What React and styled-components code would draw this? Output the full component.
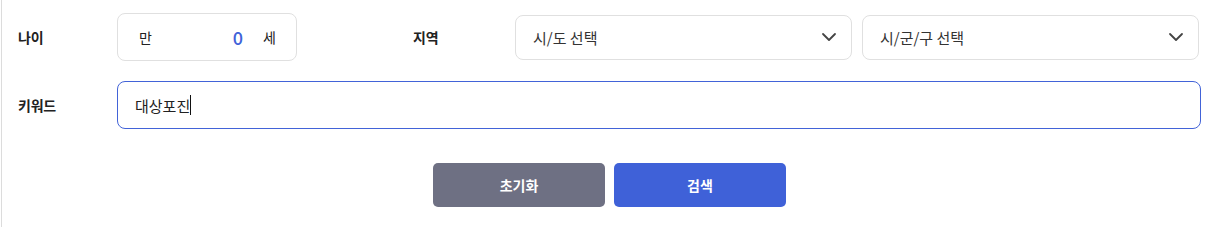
import React from "react";
import styled, { createGlobalStyle } from "styled-components";
import { ChevronDown } from "lucide-react";

const Global = createGlobalStyle`
  html, body { margin: 0; padding: 0; background: #fff; }
  body { font-family: "Noto Sans CJK KR", "Noto Sans", sans-serif; color: #222; }
  * { box-sizing: border-box; }
`;

const Frame = styled.div`
  padding-left: 1px;
  height: 227px;
`;

const Panel = styled.div`
  height: 100%;
  border-left: 1px solid #dcdcdc;
  padding: 13px 14px 0 16px;
  display: flex;
  flex-direction: column;
`;

const Row = styled.div`
  display: flex;
  align-items: center;
  margin-bottom: ${(p) => p.$gap || 0}px;
`;

const Label = styled.div`
  width: ${(p) => p.$w}px;
  margin-left: ${(p) => p.$ml || 0}px;
  flex: none;
  font-size: 14px;
  font-weight: 700;
  color: #222;
  letter-spacing: -0.2px;
`;

const AgeBox = styled.div`
  width: 180px;
  height: 48px;
  border: 1px solid #e0e0e0;
  border-radius: 8px;
  display: flex;
  align-items: center;
  padding: 0 20px 0 21px;
  font-size: 14px;
  color: #222;
`;

const AgeInput = styled.input`
  flex: 1;
  min-width: 0;
  border: none;
  outline: none;
  background: transparent;
  text-align: right;
  font-family: inherit;
  font-size: 18px;
  font-weight: 500;
  color: #4062d9;
  padding: 0;
  margin-right: 20px;
`;

const Select = styled.div`
  width: 337px;
  height: 45px;
  margin-left: ${(p) => p.$ml || 0}px;
  border: 1px solid #e0e0e0;
  border-radius: 8px;
  display: flex;
  align-items: center;
  justify-content: space-between;
  padding: 0 10px 0 17px;
  font-size: 15px;
  color: #333;
`;

const Keyword = styled.div`
  flex: 1;
  height: 48px;
  border: 1px solid #4263d8;
  border-radius: 8px;
  display: flex;
  align-items: center;
  padding: 0 17px;
  font-size: 15px;
  color: #222;
`;

const Caret = styled.span`
  display: inline-block;
  width: 1px;
  height: 20px;
  background: #111;
`;

const Buttons = styled.div`
  display: flex;
  justify-content: center;
  gap: 9px;
`;

const Button = styled.button`
  width: 172px;
  height: 44px;
  border: none;
  border-radius: 5px;
  background: ${(p) => (p.$primary ? "#3f61d8" : "#6e7083")};
  color: #fff;
  font-family: inherit;
  font-size: 14px;
  font-weight: 700;
  cursor: pointer;
`;

export default function App() {
  return (
    <Frame>
      <Global />
      <Panel>
        <Row $gap={20}>
          <Label $w={99}>나이</Label>
          <AgeBox>
            <span>만</span>
            <AgeInput defaultValue="0" />
            <span>세</span>
          </AgeBox>
          <Label $w={102} $ml={116}>지역</Label>
          <Select>
            <span>시/도 선택</span>
            <ChevronDown size={24} strokeWidth={1.8} color="#444" />
          </Select>
          <Select $ml={10}>
            <span>시/군/구 선택</span>
            <ChevronDown size={24} strokeWidth={1.8} color="#444" />
          </Select>
        </Row>
        <Row $gap={34}>
          <Label $w={99}>키워드</Label>
          <Keyword>
            대상포진<Caret />
          </Keyword>
        </Row>
        <Buttons>
          <Button>초기화</Button>
          <Button $primary>검색</Button>
        </Buttons>
      </Panel>
    </Frame>
  );
}
